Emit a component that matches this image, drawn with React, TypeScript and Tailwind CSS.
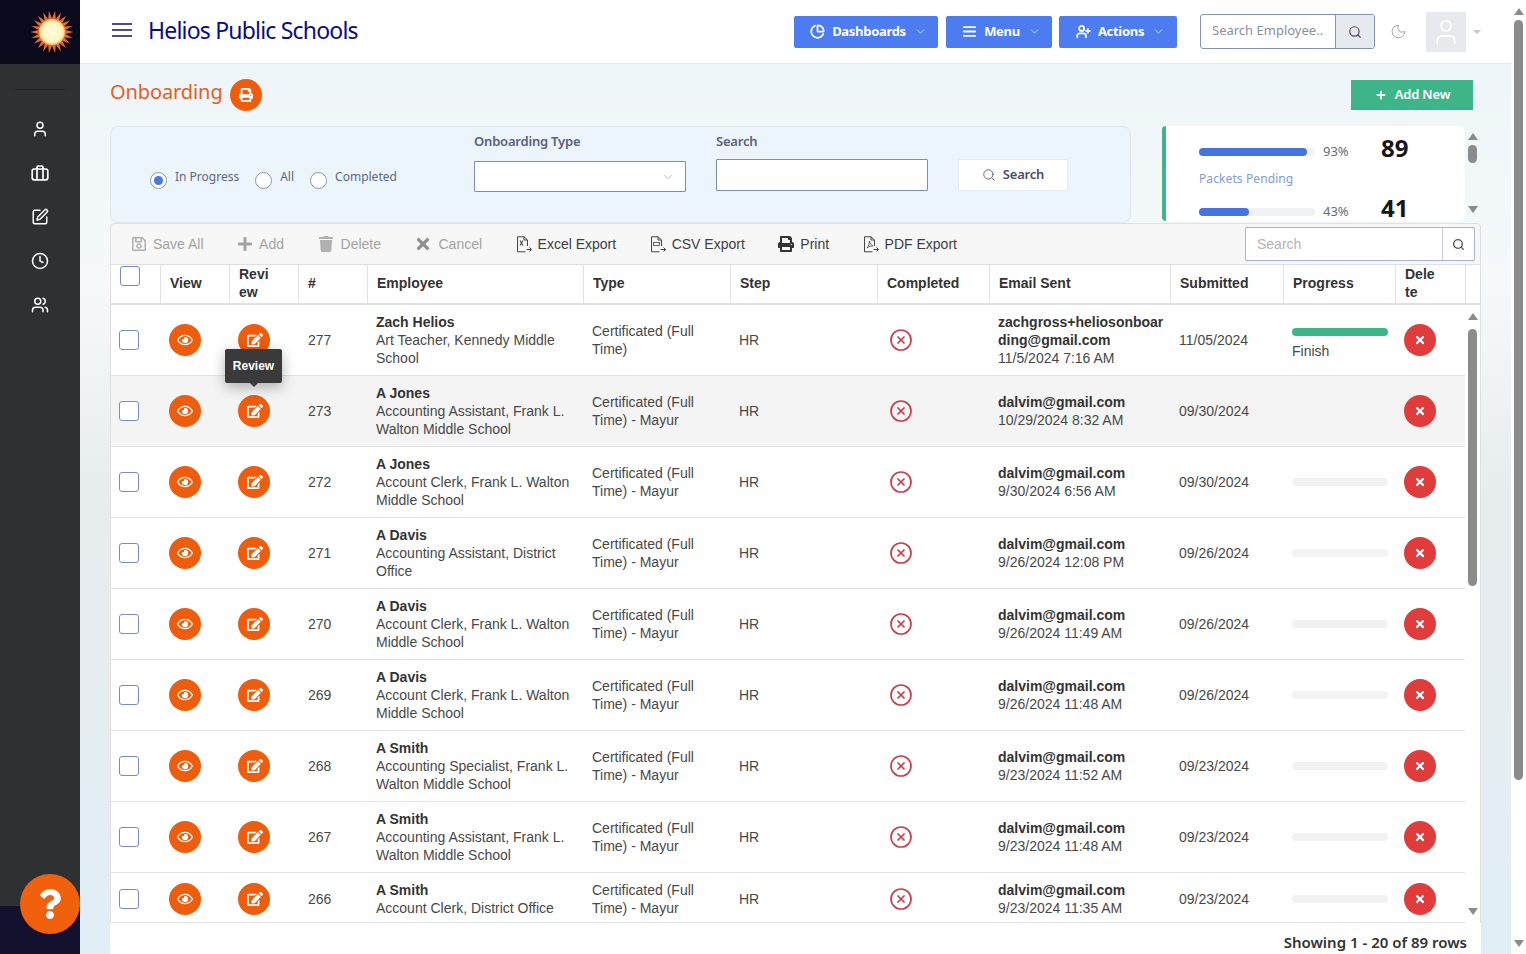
import React from "react";
import { AlignJustify, ChevronDown, CircleX, Clock, Moon, PieChart, Search, SquarePen, User, UserPlus, Users } from "lucide-react";
import { FaEdit, FaPlus, FaPrint, FaQuestion, FaRegEye, FaRegSave, FaTimes, FaTrash } from "react-icons/fa";

const sans = "font-['Noto_Sans','Open_Sans',sans-serif]";
const TYPE = "Certificated (Full Time) - Mayur";

const rows = [
  { id: 277, name: "Zach Helios", job: "Art Teacher, Kennedy Middle School", type: "Certificated (Full Time)", email: "zachgross+heliosonboarding@gmail.com", sent: "11/5/2024 7:16 AM", date: "11/05/2024", progress: "finish" },
  { id: 273, name: "A Jones", job: "Accounting Assistant, Frank L. Walton Middle School", type: TYPE, email: "dalvim@gmail.com", sent: "10/29/2024 8:32 AM", date: "09/30/2024", progress: "none" },
  { id: 272, name: "A Jones", job: "Account Clerk, Frank L. Walton Middle School", type: TYPE, email: "dalvim@gmail.com", sent: "9/30/2024 6:56 AM", date: "09/30/2024", progress: "empty" },
  { id: 271, name: "A Davis", job: "Accounting Assistant, District Office", type: TYPE, email: "dalvim@gmail.com", sent: "9/26/2024 12:08 PM", date: "09/26/2024", progress: "empty" },
  { id: 270, name: "A Davis", job: "Account Clerk, Frank L. Walton Middle School", type: TYPE, email: "dalvim@gmail.com", sent: "9/26/2024 11:49 AM", date: "09/26/2024", progress: "empty" },
  { id: 269, name: "A Davis", job: "Account Clerk, Frank L. Walton Middle School", type: TYPE, email: "dalvim@gmail.com", sent: "9/26/2024 11:48 AM", date: "09/26/2024", progress: "empty" },
  { id: 268, name: "A Smith", job: "Accounting Specialist, Frank L. Walton Middle School", type: TYPE, email: "dalvim@gmail.com", sent: "9/23/2024 11:52 AM", date: "09/23/2024", progress: "empty" },
  { id: 267, name: "A Smith", job: "Accounting Assistant, Frank L. Walton Middle School", type: TYPE, email: "dalvim@gmail.com", sent: "9/23/2024 11:48 AM", date: "09/23/2024", progress: "empty" },
  { id: 266, name: "A Smith", job: "Account Clerk, District Office", type: TYPE, email: "dalvim@gmail.com", sent: "9/23/2024 11:35 AM", date: "09/23/2024", progress: "empty" },
];

const Sun = () => {
  const pts: string[] = [];
  for (let i = 0; i < 44; i++) {
    const r = i % 2 === 0 ? 21.5 : 13.5;
    const a = (i / 44) * Math.PI * 2;
    pts.push(`${22 + r * Math.cos(a)},${22 + r * Math.sin(a)}`);
  }
  return (
    <svg width="44" height="44" viewBox="0 0 44 44">
      <defs>
        <radialGradient id="sun">
          <stop offset="0%" stopColor="#fffce0" />
          <stop offset="80%" stopColor="#fff4b8" />
          <stop offset="100%" stopColor="#f6b56a" />
        </radialGradient>
      </defs>
      <polygon points={pts.join(" ")} fill="#e8692c" />
      <circle cx="22" cy="22" r="13" fill="url(#sun)" />
    </svg>
  );
};

const Briefcase = () => (
  <svg width="18" height="18" viewBox="0 0 18 18" fill="none" stroke="white" strokeWidth="1.7">
    <rect x="1.2" y="5" width="15.6" height="10.8" rx="2" />
    <path d="M6 5V3.2A1.2 1.2 0 0 1 7.2 2h3.6A1.2 1.2 0 0 1 12 3.2V5M6 5v10.8M12 5v10.8" />
  </svg>
);

const ExportIcon = ({ kind }: { kind: "x" | "csv" | "pdf" }) => (
  <svg width="16" height="17" viewBox="0 0 16 17" fill="none" stroke="#444" strokeWidth="1">
    <path d="M11.5 10V4L8 .8H1.5v15h8" />
    <path d="M8 .8V4h3.5M10.5 13.5h5M13.5 11.5l2 2-2 2" />
    {kind === "x" && <path d="M4 4.5l3 5M7 4.5l-3 5" strokeWidth="1.1" />}
    {kind === "csv" && <rect x="3.5" y="6.5" width="6" height="3" strokeWidth="0.8" />}
    {kind === "pdf" && <path d="M4 12c2-2 2.300-5 2.300-7 1 3 2 4 3.500 5-2-.2-4 .5-5.800 2z" strokeWidth="0.8" />}
  </svg>
);

const Sidebar = () => (
  <aside className="relative flex h-full w-[80px] shrink-0 flex-col bg-[#2e3131]">
    <div className="flex h-[64px] items-center justify-end bg-[#0a0a1c] pr-[6px]">
      <Sun />
    </div>
    <div className="mx-[15px] mt-[25px] h-px bg-[#1f2222]" />
    <nav className="mt-[30px] flex flex-col items-center gap-[26px] text-white">
      <User size={18} />
      <Briefcase />
      <SquarePen size={18} />
      <Clock size={18} />
      <Users size={18} />
    </nav>
    <div className="mt-auto h-[48px] bg-[#12122e]" />
    <div className="absolute bottom-[20px] left-[20px] flex h-[60px] w-[60px] items-center justify-center rounded-full bg-[#f1600d] text-white">
      <FaQuestion size={30} />
    </div>
  </aside>
);

const NavButton = ({ icon, label, width }: { icon: React.ReactNode; label: string; width: string }) => (
  <button className={`flex h-[32px] items-center justify-center gap-[7px] rounded-[2px] bg-[#4c7cf0] pl-[5px] text-[13px] font-bold tracking-[-0.3px] text-white ${width}`}>
    {icon}
    <span>{label}</span>
    <ChevronDown size={13} strokeWidth={1.3} className="ml-[1px]" />
  </button>
);

const Hamburger = () => (
  <svg width="20" height="14" viewBox="0 0 20 14" stroke="#4c5280" strokeWidth="2" className="mb-[4px]">
    <path d="M0 1h20M0 7h20M0 13h20" />
  </svg>
);

const Header = () => (
  <header className={`flex h-[64px] shrink-0 items-center border-b border-[#e6eaee] bg-white pr-[30px] pl-[32px] ${sans}`}>
    <Hamburger />
    <h1 className="mb-[2px] ml-[16px] text-[23px] tracking-[-0.8px] text-[#0b0b86]">Helios Public Schools</h1>
    <div className="ml-auto flex items-center">
      <div className="flex gap-[8px]">
        <NavButton icon={<PieChart size={15} strokeWidth={2.8} />} label="Dashboards" width="w-[144px]" />
        <NavButton icon={<AlignJustify size={15} strokeWidth={3} />} label="Menu" width="w-[106px] mr-[-1px]" />
        <NavButton icon={<UserPlus size={15} strokeWidth={2.8} />} label="Actions" width="w-[118px]" />
      </div>
      <div className="ml-[23px] flex h-[35px] w-[175px] overflow-hidden rounded-[3px] border border-[#8493b5]">
        <span className="flex-1 pl-[11px] text-[13px] leading-[31px] whitespace-nowrap text-[#8c909b]">Search Employee..</span>
        <span className="flex w-[39px] items-center justify-center border-l border-[#8493b5] bg-[#e6e9ee] text-[#444b5c]">
          <Search size={14} />
        </span>
      </div>
      <Moon size={17} strokeWidth={1.3} className="ml-[15px] text-[#9a9ea7]" />
      <div className="ml-[19px] flex h-[40px] w-[40px] items-center justify-center rounded-[2px] bg-[#e6e9ee] text-white">
        <User size={30} strokeWidth={1.4} />
      </div>
      <span className="ml-[7px] h-0 w-0 border-x-[4px] border-t-[4px] border-x-transparent border-t-[#c4c7cc]" />
    </div>
  </header>
);

const Radio = ({ label, checked }: { label: string; checked?: boolean }) => (
  <label className="flex items-start gap-[8px]">
    <span className="mt-[5px] flex h-[17px] w-[17px] items-center justify-center rounded-full border border-[#8b95c4] bg-white">
      {checked && <span className="h-[9px] w-[9px] rounded-full bg-[#4a78e0]" />}
    </span>
    <span className="mt-px text-[12px] leading-[18px] text-[#5f6684]">{label}</span>
  </label>
);

const Filters = () => (
  <div className={`flex h-[97px] w-[1021px] items-start rounded-[8px] border border-[#e1e7ec] bg-[#edf5fc] ${sans}`}>
    <div className="mt-[40px] ml-[39px] flex w-[249px] gap-[16px]">
      <Radio label="In Progress" checked />
      <Radio label="All" />
      <Radio label="Completed" />
    </div>
    <div className="mt-[5px] ml-[75px] w-[212px]">
      <div className="text-[13px] leading-[18px] font-semibold tracking-[-0.2px] text-[#5a6080]">Onboarding Type</div>
      <div className="mt-[11px] flex h-[31px] items-center justify-end rounded-[1px] border border-[#7f8db0] bg-white pr-[10px] text-[#9aa0ac]">
        <ChevronDown size={14} strokeWidth={1.2} />
      </div>
    </div>
    <div className="mt-[5px] ml-[30px] w-[212px]">
      <div className="text-[13px] leading-[18px] font-semibold tracking-[-0.2px] text-[#5a6080]">Search</div>
      <div className="mt-[9px] h-[32px] rounded-[1px] border border-[#7f8db0] bg-white" />
    </div>
    <button className="mt-[32px] ml-[30px] flex h-[32px] w-[110px] items-center justify-center gap-[7px] border border-[#e6ebf0] bg-white text-[13px] font-semibold tracking-[-0.2px] text-[#4b4f63]">
      <Search size={14} strokeWidth={1.4} />
      Search
    </button>
  </div>
);

const Stat = ({ pct, value, bar }: { pct: string; value: string; bar: string }) => (
  <div className="flex h-[28px] items-center">
    <div className="mt-[8px] h-[8px] w-[116px] rounded-full bg-[#f1f2f4]">
      <div className={`h-full rounded-full bg-[#4573e0] ${bar}`} />
    </div>
    <span className="mt-[7px] ml-[8px] w-[58px] text-[13px] text-[#666b78]">{pct}</span>
    <span className="text-[24px] leading-none font-bold text-[#15151c]">{value}</span>
  </div>
);

const Arrow = ({ up, className }: { up?: boolean; className?: string }) => (
  <span className={`h-0 w-0 border-x-[5px] border-x-transparent ${up ? "border-b-[7px] border-b-[#8b8b8b]" : "border-t-[7px] border-t-[#8b8b8b]"} ${className ?? ""}`} />
);

const StatsPanel = () => (
  <div className={`ml-[31px] flex h-[95px] ${sans}`}>
    <div className="h-full w-[303px] rounded-l-[4px] rounded-r-[6px] border-l-[4px] border-[#3eb489] bg-white pt-[8px] pl-[33px]">
      <Stat pct="93%" value="89" bar="w-[93%]" />
      <div className="mt-[8px] text-[12px] leading-[18px] tracking-[0.1px] text-[#7f9bd6]">Packets Pending</div>
      <div className="mt-[6px]">
        <Stat pct="43%" value="41" bar="w-[43%]" />
      </div>
    </div>
    <div className="flex w-[15px] flex-col items-center pt-[7px]">
      <Arrow up />
      <div className="mt-[5px] h-[18px] w-[9px] rounded-full bg-[#8b8b8b]" />
      <Arrow className="mt-auto mb-[8px]" />
    </div>
  </div>
);

const ToolItem = ({ icon, label, off }: { icon: React.ReactNode; label: string; off?: boolean }) => (
  <span className={`flex items-center gap-[6px] ${off ? "text-[#a3a3a3]" : "text-[#3f3f3f]"}`}>
    {icon}
    {label}
  </span>
);

const Toolbar = () => (
  <div className="flex h-[42px] items-center rounded-t-[4px] border border-[#e0e0e0] bg-[#f7f7f7] pr-[5px] pl-[20px] text-[14px]">
    <div className="flex items-center gap-[33.500px]">
      <ToolItem off icon={<FaRegSave size={16} className="text-[#b0b0b0]" />} label="Save All" />
      <ToolItem off icon={<FaPlus size={16} className="text-[#a3a3a3]" />} label="Add" />
      <ToolItem off icon={<FaTrash size={16} className="mr-px text-[#b0b0b0]" />} label="Delete" />
      <ToolItem off icon={<FaTimes size={18} className="text-[#8f8f8f]" />} label="Cancel" />
      <ToolItem icon={<ExportIcon kind="x" />} label="Excel Export" />
      <ToolItem icon={<ExportIcon kind="csv" />} label="CSV Export" />
      <ToolItem icon={<FaPrint size={16} className="text-[#333]" />} label="Print" />
      <ToolItem icon={<ExportIcon kind="pdf" />} label="PDF Export" />
    </div>
    <div className="ml-auto flex h-[34px] w-[230px] rounded-[2px] border border-[#a9b4d0] bg-white">
      <span className="flex-1 pl-[11px] leading-[32px] text-[#b4b4b4]">Search</span>
      <span className="flex w-[32px] items-center justify-center border-l border-[#c9cfdd] text-[#555]">
        <Search size={13} strokeWidth={2.4} />
      </span>
    </div>
  </div>
);

const HeadCell = ({ children }: { children?: React.ReactNode }) => (
  <div className="flex items-center border-r border-[#e0e3e6] pb-[3px] pl-[9px] leading-[18px]">
    <div>{children}</div>
  </div>
);

const TableHead = () => (
  <div className="grid h-[40px] grid-cols-[50px_69px_69px_69px_216px_147px_147px_112px_181px_113px_112px_70px_15px] border-x border-b-2 border-x-[#e0e0e0] border-b-[#dfe1e3] bg-white text-[14px] font-bold text-[#333]">
    <div className="border-r border-[#e0e3e6] pl-[9px]">
      <span className="mt-[1px] block h-[20px] w-[20px] rounded-[3px] border border-[#7d8cc0] bg-white" />
    </div>
    <HeadCell>View</HeadCell>
    <HeadCell>Revi<br />ew</HeadCell>
    <HeadCell>#</HeadCell>
    <HeadCell>Employee</HeadCell>
    <HeadCell>Type</HeadCell>
    <HeadCell>Step</HeadCell>
    <HeadCell>Completed</HeadCell>
    <HeadCell>Email Sent</HeadCell>
    <HeadCell>Submitted</HeadCell>
    <HeadCell>Progress</HeadCell>
    <HeadCell>Dele<br />te</HeadCell>
    <div />
  </div>
);

const Circle = ({ children, red }: { children: React.ReactNode; red?: boolean }) => (
  <span className={`flex h-[32px] w-[32px] items-center justify-center rounded-full text-white ${red ? "bg-[#e03c3c]" : "bg-[#ee5c0d]"}`}>
    {children}
  </span>
);

const Row = ({ row, index }: { row: (typeof rows)[number]; index: number }) => (
  <div className={`grid grid-cols-[50px_69px_69px_69px_216px_147px_147px_112px_181px_113px_112px_70px] items-center border-b border-[#dfe3e6] text-[14px] leading-[18px] text-[#484848] ${index === 8 ? "h-[50px] pt-[2px]" : "h-[71px]"} ${index === 1 ? "bg-[#f4f4f4]" : ""}`}>
    <div className="pl-[8px]">
      <span className="block h-[20px] w-[20px] rounded-[3px] border border-[#7d8cc0] bg-white" />
    </div>
    <div className="pl-[8px]">
      <Circle><FaRegEye size={16} /></Circle>
    </div>
    <div className="relative pl-[8px]">
      <Circle><FaEdit size={16} className="ml-[2px]" /></Circle>
      {index === 0 && (
        <div className="absolute top-[25px] left-[-5px] z-10 flex h-[34px] w-[57px] items-center justify-center rounded-[2px] bg-[#3a3a3a] text-[12px] font-bold text-white shadow-[0_4px_14px_rgba(0,0,0,0.3)]">
          Review
          <span className="absolute bottom-[-4px] left-[25px] h-0 w-0 border-x-[4px] border-t-[4px] border-x-transparent border-t-[#3a3a3a]" />
        </div>
      )}
    </div>
    <div className="pl-[9px]">{row.id}</div>
    <div className="pr-[9px] pl-[8px]">
      <div className="font-bold text-[#333]">{row.name}</div>
      <div>{row.job}</div>
    </div>
    <div className="pr-[9px] pl-[8px]">{row.type}</div>
    <div className="pl-[8px]">HR</div>
    <div className="pl-[11px] text-[#c63f4b]">
      <CircleX size={24} strokeWidth={1.7} />
    </div>
    <div className="pr-[6px] pl-[8px]">
      <div className="font-bold break-all text-[#333]">{row.email}</div>
      <div>{row.sent}</div>
    </div>
    <div className="pl-[8px]">{row.date}</div>
    <div className="pr-[8px] pl-[8px]">
      {row.progress === "finish" && (
        <div className="mt-[8px]">
          <div className="mb-[6px] h-[8px] rounded-full bg-[#3eb489]" />
          <div>Finish</div>
        </div>
      )}
      {row.progress === "empty" && <div className="h-[8px] rounded-full bg-[#f2f2f2]" />}
    </div>
    <div className="pl-[8px]">
      <Circle red><FaTimes size={12} /></Circle>
    </div>
  </div>
);

const TableBody = () => (
  <div className="flex h-[618px] border-x border-[#e0e0e0] bg-white">
    <div className="w-[1354px]">
      {rows.map((row, i) => (
        <Row key={row.id} row={row} index={i} />
      ))}
    </div>
    <div className="flex flex-1 flex-col items-center pt-[8px] pb-[8px]">
      <Arrow up />
      <div className="mt-[9px] h-[257px] w-[9px] rounded-full bg-[#8b8b8b]" />
      <Arrow className="mt-auto" />
    </div>
  </div>
);

export default function App() {
  return (
    <div className="flex h-screen overflow-hidden bg-white font-['Liberation_Sans',Arial,sans-serif]">
      <Sidebar />
      <div className="flex min-w-0 flex-1 flex-col">
        <Header />
        <main className="flex-1 overflow-hidden bg-[linear-gradient(180deg,#eef5f8_0%,#f5f9fb_25%,#e6ebee_50%,#e6edf1_70%,#e0eef6_100%)] px-[30px]">
          <div className={`flex h-[62px] items-start ${sans}`}>
            <h2 className="mt-[12px] text-[20px] leading-[32px] tracking-[-0.1px] text-[#e2601e]">Onboarding</h2>
            <span className="mt-[15px] ml-[7px] flex h-[32px] w-[32px] items-center justify-center rounded-full bg-[#ee5c0d] text-white">
              <FaPrint size={14} />
            </span>
            <button className="mt-[16px] mr-[8px] ml-auto flex h-[30px] w-[122px] items-center justify-center gap-[9px] bg-[#3eb489] pl-[2px] text-[13px] font-semibold tracking-[-0.2px] text-white">
              <FaPlus size={10} />
              Add New
            </button>
          </div>
          <div className="flex items-start">
            <Filters />
            <StatsPanel />
          </div>
          <Toolbar />
          <TableHead />
          <TableBody />
          <div className={`flex h-[32px] items-center justify-end bg-white pt-[6px] pr-[14px] text-[15px] font-semibold text-[#333] ${sans}`}>
            Showing 1 - 20 of 89 rows
          </div>
        </main>
      </div>
      <div className="flex w-[15px] shrink-0 flex-col items-center bg-white pt-[8px] pb-[7px]">
        <Arrow up />
        <div className="mt-[5px] h-[760px] w-[9px] rounded-full bg-[#8b8b8b]" />
        <Arrow className="mt-auto" />
      </div>
    </div>
  );
}
